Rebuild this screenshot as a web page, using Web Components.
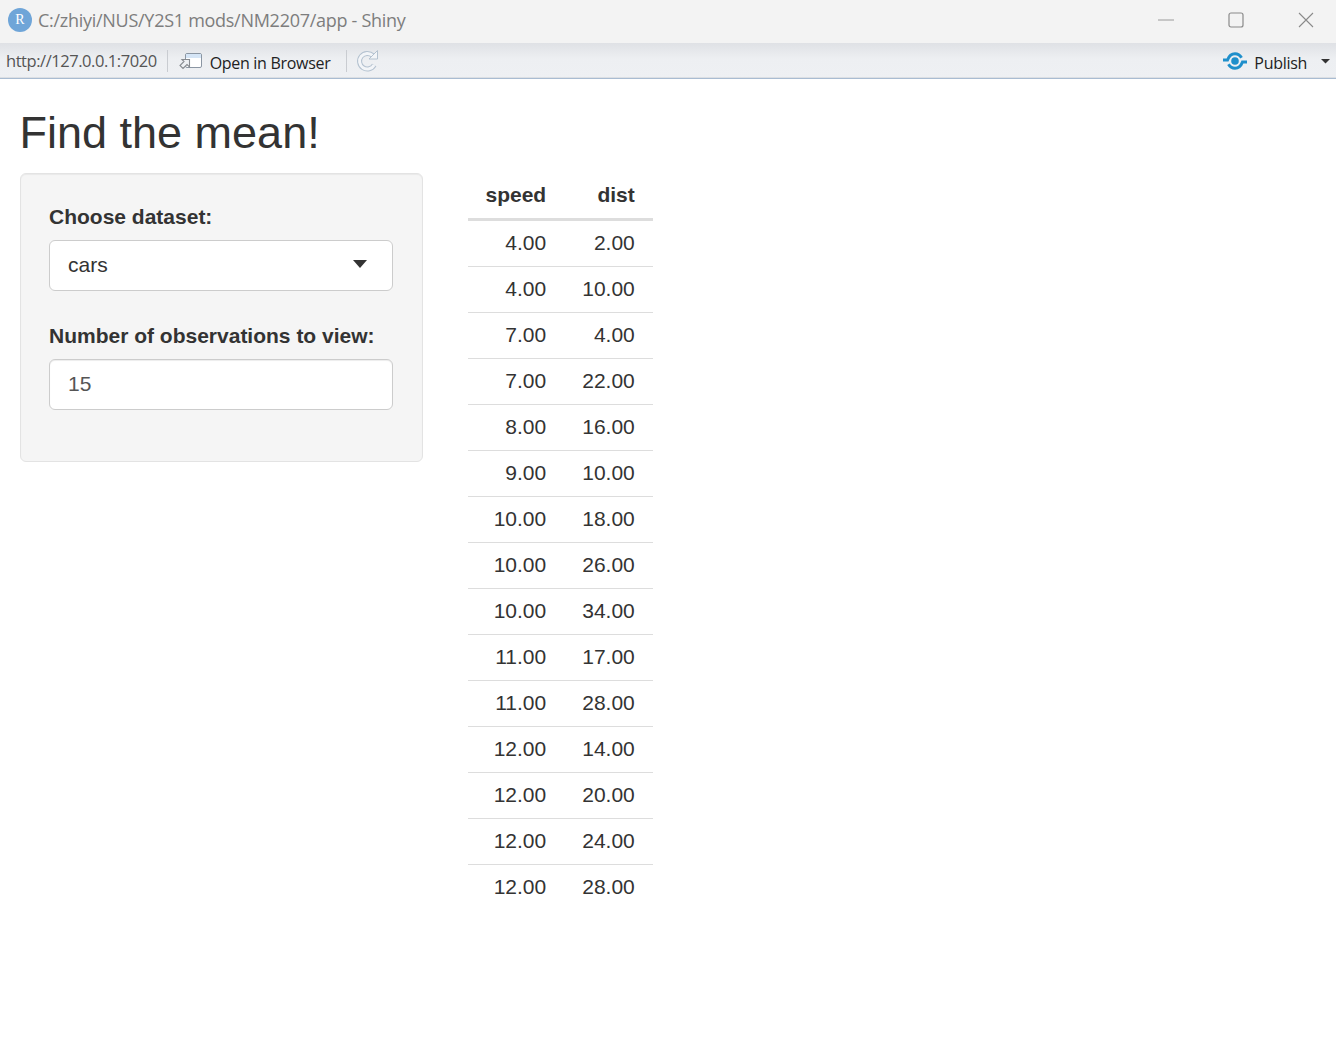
<!DOCTYPE html>
<html>
<head>
<meta charset="utf-8">
<title>Find the mean!</title>
<style>
  html, body { margin: 0; height: 100%; background: #fff; overflow: hidden; }
  body { font-family: "Liberation Sans", Arial, sans-serif; color: #333; }
</style>
</head>
<body>
<window-titlebar title="C:/zhiyi/NUS/Y2S1 mods/NM2207/app - Shiny"></window-titlebar>
<viewer-toolbar url="http://127.0.0.1:7020"></viewer-toolbar>
<shiny-page heading="Find the mean!">
  <side-panel slot="side">
    <field-group label="Choose dataset:"><select-box value="cars"></select-box></field-group>
    <field-group label="Number of observations to view:"><number-box value="15"></number-box></field-group>
  </side-panel>
  <data-table slot="main"></data-table>
</shiny-page>

<script>
class WindowTitlebar extends HTMLElement {
  constructor() {
    super();
    this.attachShadow({ mode: 'open' });
    this.shadowRoot.innerHTML = `
      <style>
        :host { display: flex; align-items: center; height: 43px; background: #f3f3f3; }
        .logo {
          width: 24px; height: 24px; margin-left: 8px; margin-right: 6px; border-radius: 50%; margin-bottom: 3px;
          background: #6fa5d8; color: #fff; display: flex; align-items: center; justify-content: center;
          font: 14px "Liberation Serif", serif;
        }
        .title { flex: 1; padding-bottom: 3px; font: 18px "Open Sans", sans-serif; letter-spacing: -0.28px; color: #7d7d7d; white-space: nowrap; }
        .btn { display: flex; justify-content: center; align-items: center; width: 70px; height: 43px; padding-bottom: 3px; box-sizing: border-box; position: relative; left: 5px; }
        svg { display: block; }
      </style>
      <div class="logo">R</div>
      <div class="title">${this.getAttribute('title')}</div>
      <div class="btn"><svg width="16" height="16"><path d="M0 8h16" stroke="#9a9a9a" stroke-width="1"/></svg></div>
      <div class="btn"><svg width="16" height="16"><rect x="1" y="1" width="14" height="14" rx="2" fill="none" stroke="#8a8a8a" stroke-width="1.2"/></svg></div>
      <div class="btn"><svg width="16" height="16"><path d="M1 1l14 14M15 1L1 15" stroke="#8a8a8a" stroke-width="1.1"/></svg></div>
    `;
  }
}

class ViewerToolbar extends HTMLElement {
  constructor() {
    super();
    this.attachShadow({ mode: 'open' });
    this.shadowRoot.innerHTML = `
      <style>
        :host {
          display: flex; align-items: center; height: 36px; box-sizing: border-box;
          background: linear-gradient(#dfe1e5, #edeff2 45%, #eef0f3);
          border-bottom: 1px solid #a9bcd2;
          box-shadow: inset 0 -1px 0 #dcdfe3;
          font: 16px "Open Sans", sans-serif; letter-spacing: -0.3px; color: #222;
        }
        .url { margin-left: 6px; font-size: 16.5px; color: #555; letter-spacing: -0.45px; }
        .sep { width: 1px; height: 22px; background: #c9ccd1; }
        .open { margin-left: 7px; color: #222; position: relative; top: 2px; }
        .spacer { flex: 1; }
        .publish { margin-left: 6px; color: #222; position: relative; top: 2px; }
        svg { display: block; }
      </style>
      <span class="url">${this.getAttribute('url')}</span>
      <span class="sep" style="margin-left:10px"></span>
      <svg style="margin-left:11px" width="24" height="18" viewBox="0 0 24 18">
        <rect x="6.5" y="1.5" width="16" height="14" rx="1.5" fill="#fff" stroke="#8b96a3"/>
        <rect x="7" y="2" width="15" height="4" fill="#d5e5f6"/>
        <path d="M3 7.5H10.5V15L8 12.5 4 16.5 1 13.5 5 9.5z" fill="#eef0f3" stroke="#878b90" stroke-width="1.1"/>
      </svg>
      <span class="open">Open in Browser</span>
      <span class="sep" style="margin-left:16px"></span>
      <svg style="margin-left:9px" width="24" height="24" viewBox="0 0 24 24">
        <path d="M16.8 6.6A7.8 7.8 0 1 0 18.2 16" fill="none" stroke="#b4c2d0" stroke-width="5"/>
        <path d="M16.8 6.6A7.8 7.8 0 1 0 18.2 16" fill="none" stroke="#f3f5f8" stroke-width="3"/>
        <path d="M21.5 1.5V10H13z" fill="#f3f5f8" stroke="#b4c2d0" stroke-width="1"/>
      </svg>
      <span class="spacer"></span>
      <svg width="26" height="20" viewBox="0 0 26 20">
        <circle cx="13" cy="10" r="3.8" fill="#1f8fcb"/>
        <path d="M1 9h4.5C7 5 9.5 2.8 13 2.8c2.8 0 5 1.4 6.5 4" fill="none" stroke="#1f8fcb" stroke-width="3"/>
        <path d="M25 11h-4.5C19 15 16.5 17.2 13 17.2c-2.8 0-5-1.4-6.5-4" fill="none" stroke="#1f8fcb" stroke-width="3"/>
      </svg>
      <span class="publish">Publish</span>
      <svg style="margin:0 6px 0 14px" width="9" height="6"><path d="M0 1h9L4.5 5.5z" fill="#333"/></svg>
    `;
  }
}

class ShinyPage extends HTMLElement {
  constructor() {
    super();
    this.attachShadow({ mode: 'open' });
    this.shadowRoot.innerHTML = `
      <style>
        :host { display: block; padding: 0 20px; }
        h2 { margin: 0 0 0 -0.5px; padding-top: 29px; height: 65px; font: 500 45px/50px "Liberation Sans", Arial, sans-serif; color: #333; }
        .cols { display: flex; gap: 45px; align-items: flex-start; }
        ::slotted([slot=side]) { width: 403px; flex: none; }
      </style>
      <h2>${this.getAttribute('heading')}</h2>
      <div class="cols">
        <slot name="side"></slot>
        <slot name="main"></slot>
      </div>
    `;
  }
}

class SidePanel extends HTMLElement {
  constructor() {
    super();
    this.attachShadow({ mode: 'open' });
    this.shadowRoot.innerHTML = `
      <style>
        :host {
          display: flex; flex-direction: column; gap: 30px; box-sizing: border-box; height: 289px;
          padding: 28px 29px 0 28px; background: #f5f5f5; border: 1px solid #e3e3e3; border-radius: 6px;
          box-shadow: inset 0 1px 1px rgba(0,0,0,.05);
        }
      </style>
      <slot></slot>
    `;
  }
}

class FieldGroup extends HTMLElement {
  constructor() {
    super();
    this.attachShadow({ mode: 'open' });
    this.shadowRoot.innerHTML = `
      <style>
        :host { display: block; }
        label { display: block; font: bold 21px/30px "Liberation Sans", Arial, sans-serif; color: #333; margin-bottom: 8px; }
      </style>
      <label>${this.getAttribute('label')}</label>
      <slot></slot>
    `;
  }
}

class SelectBox extends HTMLElement {
  constructor() {
    super();
    this.attachShadow({ mode: 'open' });
    this.shadowRoot.innerHTML = `
      <style>
        :host {
          display: flex; align-items: center; justify-content: space-between; box-sizing: border-box; height: 51px;
          padding: 0 25px 2px 18px; background: #fff; border: 1px solid #ccc; border-radius: 6px;
          font: 21px "Liberation Sans", Arial, sans-serif; color: #333;
        }
        svg { display: block; margin-top: -1px; }
      </style>
      <span>${this.getAttribute('value')}</span>
      <svg width="14" height="8"><path d="M0 0h14L7 8z" fill="#333"/></svg>
    `;
  }
}

class NumberBox extends HTMLElement {
  constructor() {
    super();
    this.attachShadow({ mode: 'open' });
    this.shadowRoot.innerHTML = `
      <style>
        :host {
          display: flex; align-items: center; box-sizing: border-box; height: 51px;
          padding: 0 18px 2px; background: #fff; border: 1px solid #ccc; border-radius: 6px;
          box-shadow: inset 0 1px 1px rgba(0,0,0,.075);
          font: 21px "Liberation Sans", Arial, sans-serif; color: #555;
        }
      </style>
      <span>${this.getAttribute('value')}</span>
    `;
  }
}

const CARS = [
  [4, 2], [4, 10], [7, 4], [7, 22], [8, 16], [9, 10], [10, 18], [10, 26],
  [10, 34], [11, 17], [11, 28], [12, 14], [12, 20], [12, 24], [12, 28]
];

class DataTable extends HTMLElement {
  constructor() {
    super();
    this.attachShadow({ mode: 'open' });
    const rows = CARS.map(r => `<tr><td>${r[0].toFixed(2)}</td><td>${r[1].toFixed(2)}</td></tr>`).join('');
    this.shadowRoot.innerHTML = `
      <style>
        :host { display: block; }
        table { border-collapse: collapse; font: 21px/30px "Liberation Sans", Arial, sans-serif; color: #333; }
        th, td { text-align: right; padding: 0 18.5px 0 17.5px; }
        th { font-weight: bold; height: 46px; box-sizing: border-box; border-bottom: 3px solid #ddd; }
        td { height: 45px; border-top: 1px solid #ddd; }
        tr:first-child td { border-top: 0; }
      </style>
      <table>
        <thead><tr><th>speed</th><th>dist</th></tr></thead>
        <tbody>${rows}</tbody>
      </table>
    `;
  }
}

customElements.define('window-titlebar', WindowTitlebar);
customElements.define('viewer-toolbar', ViewerToolbar);
customElements.define('shiny-page', ShinyPage);
customElements.define('side-panel', SidePanel);
customElements.define('field-group', FieldGroup);
customElements.define('select-box', SelectBox);
customElements.define('number-box', NumberBox);
customElements.define('data-table', DataTable);
</script>
</body>
</html>
